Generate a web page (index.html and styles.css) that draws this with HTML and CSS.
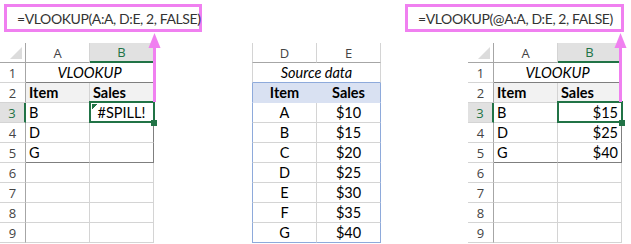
FILE: index.html
```html
<!DOCTYPE html>
<html lang="en">
<head>
    <meta charset="UTF-8">
    <title>VLOOKUP spill vs implicit intersection</title>
    <link rel="stylesheet" href="styles.css">
</head>
<body>
<div class="page">
    <!-- left: whole-column lookup that spills -->
    <div class="panel panel-left">
        <div class="formula">=VLOOKUP(A:A, D:E, 2, FALSE)</div>
        <div class="sheet">
            <div class="corner"></div>
            <div class="col-head">A</div>
            <div class="col-head active">B</div>

            <div class="row-head">1</div>
            <div class="cell title wide edge-b">VLOOKUP</div>

            <div class="row-head">2</div>
            <div class="cell head">Item</div>
            <div class="cell head edge-r">Sales</div>

            <div class="row-head active">3</div>
            <div class="cell">B</div>
            <div class="cell center edge-r sel err">#SPILL!</div>

            <div class="row-head">4</div>
            <div class="cell">D</div>
            <div class="cell edge-r"></div>

            <div class="row-head">5</div>
            <div class="cell edge-b">G</div>
            <div class="cell edge-r edge-b"></div>

            <div class="row-head">6</div><div class="cell"></div><div class="cell"></div>
            <div class="row-head">7</div><div class="cell"></div><div class="cell"></div>
            <div class="row-head">8</div><div class="cell"></div><div class="cell"></div>
            <div class="row-head">9</div><div class="cell"></div><div class="cell"></div>
        </div>
    </div>

    <!-- middle: lookup table -->
    <div class="panel panel-mid">
        <div class="sheet source">
            <div class="col-head first">D</div>
            <div class="col-head">E</div>

            <div class="cell title wide first blue-b">Source data</div>

            <div class="cell head tint first blue-l">Item</div>
            <div class="cell head tint blue-r">Sales</div>

            <div class="cell center first blue-l">A</div><div class="cell center blue-r">$10</div>
            <div class="cell center first blue-l">B</div><div class="cell center blue-r">$15</div>
            <div class="cell center first blue-l">C</div><div class="cell center blue-r">$20</div>
            <div class="cell center first blue-l">D</div><div class="cell center blue-r">$25</div>
            <div class="cell center first blue-l">E</div><div class="cell center blue-r">$30</div>
            <div class="cell center first blue-l">F</div><div class="cell center blue-r">$35</div>
            <div class="cell center first blue-l blue-b">G</div><div class="cell center blue-r blue-b">$40</div>
        </div>
    </div>

    <!-- right: implicit intersection with @ -->
    <div class="panel panel-right">
        <div class="formula">=VLOOKUP(@A:A, D:E, 2, FALSE)</div>
        <div class="sheet">
            <div class="corner"></div>
            <div class="col-head">A</div>
            <div class="col-head active">B</div>

            <div class="row-head">1</div>
            <div class="cell title wide edge-b">VLOOKUP</div>

            <div class="row-head">2</div>
            <div class="cell head">Item</div>
            <div class="cell head edge-r">Sales</div>

            <div class="row-head active">3</div>
            <div class="cell">B</div>
            <div class="cell right edge-r sel">$15</div>

            <div class="row-head">4</div>
            <div class="cell">D</div>
            <div class="cell right edge-r">$25</div>

            <div class="row-head">5</div>
            <div class="cell edge-b">G</div>
            <div class="cell right edge-r edge-b">$40</div>

            <div class="row-head">6</div><div class="cell"></div><div class="cell"></div>
            <div class="row-head">7</div><div class="cell"></div><div class="cell"></div>
            <div class="row-head">8</div><div class="cell"></div><div class="cell"></div>
            <div class="row-head">9</div><div class="cell"></div><div class="cell"></div>
        </div>
    </div>

    <!-- callout arrows from formula boxes down to the active cells -->
    <svg class="arrows" width="631" height="244" viewBox="0 0 631 244">
        <g fill="#f080f0" stroke="#f080f0">
            <line x1="154.5" y1="44" x2="154.5" y2="102" stroke-width="3"/>
            <polygon points="154.5,33 148.5,48 160.5,48" stroke="none"/>
            <line x1="620.5" y1="44" x2="620.5" y2="102" stroke-width="3"/>
            <polygon points="620.5,33 614.5,48 626.5,48" stroke="none"/>
        </g>
    </svg>
</div>
</body>
</html>
```

FILE: styles.css
```css
* {
    box-sizing: border-box;
}
body {
    margin: 0;
    background: #ffffff;
    font-family: Lato, "Open Sans", sans-serif;
    color: #000000;
}
.page {
    position: relative;
    display: flex;
    width: 631px;
    height: 244px;
    overflow: hidden;
}
.panel-left {
    width: 252px;
}
.panel-mid {
    width: 129px;
    padding-top: 43px;
}
.panel-right {
    flex: 1;
    padding-left: 24px;
}

/* formula bar callout */
.formula {
    height: 28px;
    margin-top: 4px;
    border: 3px solid #f080f0;
    padding: 0 10px;
    display: flex;
    align-items: center;
    font-size: 14px;
    letter-spacing: -0.4px;
    color: #333333;
    white-space: nowrap;
}
.panel-left .formula {
    margin-left: 4px;
    width: 198px;
}
.panel-right .formula {
    width: 219px;
}

/* grid */
.sheet {
    display: grid;
    grid-template-columns: 26px 64px 64px;
    grid-auto-rows: 20px;
    margin-top: 11px;
}
.panel-right .sheet {
    margin-left: 63px;
}
.sheet.source {
    grid-template-columns: 65px 64px;
    margin-top: 0;
}
.corner,
.col-head,
.row-head,
.cell {
    border-right: 1px solid #d4d4d4;
    border-bottom: 1px solid #d4d4d4;
    display: flex;
    align-items: center;
    white-space: nowrap;
}
.corner {
    position: relative;
    border-right-color: #a6a6a6;
    border-bottom-color: #a6a6a6;
}
.corner:after {
    content: "";
    position: absolute;
    right: 3px;
    bottom: 3px;
    border-style: solid;
    border-width: 0 0 12px 12px;
    border-color: transparent transparent #dcdcdc transparent;
}
.col-head,
.row-head {
    justify-content: center;
    font-family: "Open Sans", sans-serif;
    font-size: 13px;
    color: #444444;
}
.col-head {
    border-bottom-color: #a6a6a6;
}
.row-head {
    border-right-color: #a6a6a6;
}
.col-head.active {
    background: #e1e1e1;
    color: #217346;
    border-bottom: 2px solid #217346;
}
.row-head.active {
    background: #e1e1e1;
    color: #217346;
    border-right: 2px solid #217346;
}
.col-head.first,
.cell.first {
    border-left: 1px solid #d4d4d4;
}

/* cells */
.cell {
    padding: 0 3px;
    font-size: 14.5px;
}
.wide {
    grid-column: span 2;
}
.title {
    justify-content: center;
    font-style: italic;
}
.head {
    background: #f2f2f2;
    font-weight: bold;
}
.center {
    justify-content: center;
}
.right {
    justify-content: flex-end;
}
.edge-r {
    border-right-color: #7f7f7f;
}
.edge-b {
    border-bottom-color: #7f7f7f;
}

/* source table */
.tint {
    background: #d9e1f2;
    justify-content: center;
    border-bottom-color: #d9e1f2;
}
.tint.first {
    border-right-color: #d9e1f2;
}
.cell.blue-l {
    border-left-color: #8eaadb;
}
.cell.blue-r {
    border-right-color: #8eaadb;
}
.cell.blue-b {
    border-bottom-color: #8eaadb;
}

/* active cell */
.sel {
    position: relative;
}
.sel:after {
    content: "";
    position: absolute;
    top: -2px;
    left: -1px;
    right: -2px;
    bottom: -1px;
    border: 2px solid #217346;
}
.sel:before {
    content: "";
    position: absolute;
    right: -4px;
    bottom: -4px;
    width: 6px;
    height: 6px;
    background: #217346;
    z-index: 1;
}

/* error indicator in the corner of a cell */
.err {
    background-image: linear-gradient(135deg, #217346 50%, transparent 50%);
    background-size: 5px 5px;
    background-position: 2px 1px;
    background-repeat: no-repeat;
}

.arrows {
    position: absolute;
    left: 0;
    top: 0;
    pointer-events: none;
}
```
